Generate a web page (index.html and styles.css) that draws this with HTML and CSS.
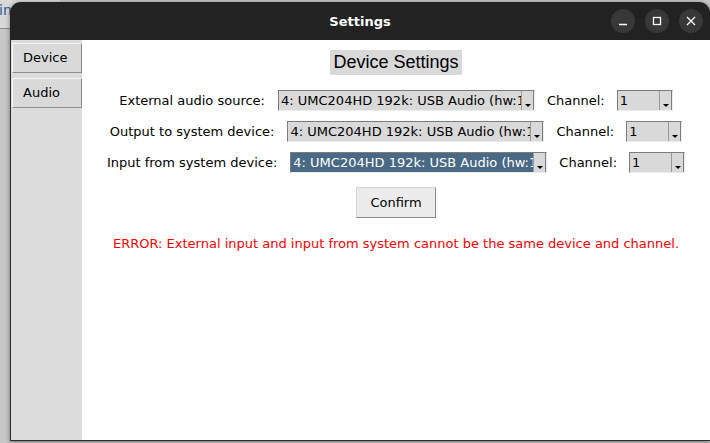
FILE: index.html
```html
<!DOCTYPE html>
<html>
<head>
<meta charset="utf-8">
<link rel="stylesheet" href="styles.css">
</head>
<body>
<div class="desktop">
  <div class="bgwin"><span class="bgtext">in</span></div>
  <div class="window">
    <div class="titlebar">
      <div class="title">Settings</div>
      <div class="controls">
        <span class="ctl"><svg width="24" height="24" viewBox="0 0 24 24"><line x1="8" y1="15.5" x2="16" y2="15.5" stroke="#fff" stroke-width="1.4"/></svg></span>
        <span class="ctl"><svg width="24" height="24" viewBox="0 0 24 24"><rect x="8.5" y="8.5" width="7" height="7" fill="none" stroke="#fff" stroke-width="1.3"/></svg></span>
        <span class="ctl"><svg width="24" height="24" viewBox="0 0 24 24"><path d="M8 8 L16 16 M16 8 L8 16" stroke="#fff" stroke-width="1.3"/></svg></span>
      </div>
    </div>
    <div class="main">
      <div class="sidebar">
        <div class="tab">Device</div>
        <div class="tab">Audio</div>
      </div>
      <div class="content">
        <div class="heading">Device Settings</div>
        <div class="rows">
          <div class="row">
            <span class="label">External audio source:</span>
            <div class="combo wide"><span class="val">4: UMC204HD 192k: USB Audio (hw:1,0)</span><span class="arrow"></span></div>
            <span class="chan">Channel:</span>
            <div class="combo narrow"><span class="val">1</span><span class="arrow"></span></div>
          </div>
          <div class="row">
            <span class="label">Output to system device:</span>
            <div class="combo wide"><span class="val">4: UMC204HD 192k: USB Audio (hw:1,0)</span><span class="arrow"></span></div>
            <span class="chan">Channel:</span>
            <div class="combo narrow"><span class="val">1</span><span class="arrow"></span></div>
          </div>
          <div class="row">
            <span class="label">Input from system device:</span>
            <div class="combo wide sel"><span class="val">4: UMC204HD 192k: USB Audio (hw:1,0)</span><span class="arrow"></span></div>
            <span class="chan">Channel:</span>
            <div class="combo narrow"><span class="val">1</span><span class="arrow"></span></div>
          </div>
        </div>
        <div class="confirm">Confirm</div>
        <div class="error">ERROR: External input and input from system cannot be the same device and channel.</div>
      </div>
    </div>
  </div>
</div>
</body>
</html>
```
FILE: styles.css
```css
html, body {
  margin: 0;
  padding: 0;
  width: 710px;
  height: 443px;
  overflow: hidden;
}
body {
  background: #c6c6c6;
  font-family: "DejaVu Sans", sans-serif;
  font-size: 13px;
  color: #000;
}
.desktop {
  position: relative;
  width: 710px;
  height: 443px;
}
.bgwin {
  position: absolute;
  left: 0;
  top: 0;
  width: 60px;
  height: 28px;
  background: #d8d8d8;
  border-bottom: 1px solid #8a8a8a;
}
.bgtext {
  position: absolute;
  left: -1px;
  top: 2px;
  color: #2f5d96;
  font-size: 14px;
}
.window {
  position: absolute;
  left: 10px;
  top: 2px;
  width: 700px;
  height: 439px;
  border-radius: 11px 11px 0 0;
  overflow: hidden;
  background: #222222;
  box-shadow: 0 1px 5px rgba(0,0,0,0.45);
  display: flex;
  flex-direction: column;
}
.titlebar {
  height: 38px;
  flex: none;
  position: relative;
  display: flex;
  align-items: center;
  justify-content: center;
}
.title {
  color: #ffffff;
  font-weight: bold;
  font-size: 13px;
  margin-top: 1px;
}
.controls {
  position: absolute;
  right: 7px;
  top: 7px;
  display: flex;
  gap: 10px;
}
.ctl {
  width: 24px;
  height: 24px;
  border-radius: 50%;
  background: #383838;
  display: block;
}
.ctl svg { display: block; }
.main {
  flex: 1;
  display: flex;
  border-left: 1px solid #2b2b2b;
  border-bottom: 1px solid #2b2b2b;
  background: #ffffff;
}
.sidebar {
  width: 71px;
  flex: none;
  background: #dcdcdc;
  padding-top: 3px;
  box-sizing: border-box;
  display: flex;
  flex-direction: column;
  gap: 5px;
}
.tab {
  width: 70px;
  height: 30px;
  margin-left: 1px;
  box-sizing: border-box;
  border: 1px solid;
  border-color: #f6f6f6 #8c8c8c #8c8c8c #f6f6f6;
  background: #d9d9d9;
  padding-left: 10px;
  line-height: 27px;
}
.content {
  flex: 1;
  display: flex;
  flex-direction: column;
  align-items: center;
  padding-top: 10px;
}
.heading {
  font-family: "Liberation Sans", Arial, sans-serif;
  font-size: 18px;
  background: #d9d9d9;
  height: 25px;
  line-height: 25px;
  padding: 0 3px;
}
.rows {
  margin-top: 15px;
  display: flex;
  flex-direction: column;
  gap: 10px;
}
.row {
  display: flex;
  justify-content: center;
  align-items: center;
  height: 21px;
}
.label { margin-right: 13px; }
.chan { margin: 0 12px; }
.combo {
  display: flex;
  height: 21px;
  box-sizing: border-box;
  border: 1px solid;
  border-color: #7c7c7c #ececec #ececec #7c7c7c;
  background: #d9d9d9;
}
.combo.wide { width: 257px; }
.combo.narrow { width: 56px; }
.val {
  flex: 1;
  overflow: hidden;
  white-space: nowrap;
  padding-left: 2px;
  line-height: 19px;
}
.combo.sel .val {
  background: #4a6984;
  color: #ffffff;
}
.arrow {
  width: 13px;
  flex: none;
  position: relative;
  box-sizing: border-box;
  border-left: 1px solid #9a9a9a;
  border-right: 1px solid #7c7c7c;
}
.arrow::after {
  content: "";
  position: absolute;
  left: 3px;
  bottom: 3px;
  width: 0;
  height: 0;
  border-left: 3px solid transparent;
  border-right: 3px solid transparent;
  border-top: 3px solid #000;
}
.confirm {
  margin-top: 14px;
  width: 80px;
  height: 31px;
  box-sizing: border-box;
  border: 1px solid;
  border-color: #d4d4d4 #8c8c8c #8c8c8c #d4d4d4;
  background: #ececec;
  text-align: center;
  line-height: 29px;
}
.error {
  margin-top: 18px;
  color: #ff0000;
  line-height: 15px;
}
```
